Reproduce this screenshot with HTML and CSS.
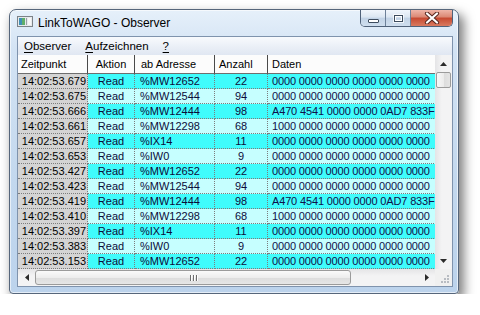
FILE: index.html
```html
<!DOCTYPE html>
<html lang="de">
<head>
<meta charset="UTF-8">
<title>LinkToWAGO - Observer</title>
<link rel="stylesheet" href="styles.css">
</head>
<body>

<div class="window">
    <div class="titlebar">
        <svg class="app-icon" width="16" height="11" viewBox="0 0 16 11">
            <rect x="0.5" y="0.5" width="15" height="10" fill="#e6e9ec" stroke="#7c8288"/>
            <rect x="2" y="2" width="3" height="7" fill="#3f8fb6"/>
            <rect x="5" y="2" width="3" height="7" fill="#5fae6a"/>
            <rect x="9" y="2" width="1" height="7" fill="#9aa0a6"/>
            <rect x="11" y="2" width="3" height="7" fill="#f7f7f7"/>
        </svg>
        <span class="title">LinkToWAGO - Observer</span>
        <div class="caption-buttons">
            <div class="cap-btn cap-min"><span class="glyph-min"></span></div>
            <div class="cap-btn cap-max"><span class="glyph-max"></span></div>
            <div class="cap-btn cap-close">
                <svg width="16" height="12" viewBox="0 0 16 12">
                    <path d="M3 1.5 L13 10.5 M13 1.5 L3 10.5" stroke="#5a2a22" stroke-width="4.2" stroke-linecap="round"/>
                    <path d="M3 1.5 L13 10.5 M13 1.5 L3 10.5" stroke="#ffffff" stroke-width="2.2" stroke-linecap="round"/>
                </svg>
            </div>
        </div>
    </div>

    <div class="client">
        <div class="menubar">
            <span class="menu-entry"><u>O</u>bserver</span>
            <span class="menu-entry"><u>A</u>ufzeichnen</span>
            <span class="menu-entry"><u>?</u></span>
        </div>

        <div class="listview">
            <div class="grid-area">
                <table class="log">
                    <colgroup>
                        <col style="width:70px">
                        <col style="width:47px">
                        <col style="width:80px">
                        <col style="width:53px">
                        <col style="width:230px">
                    </colgroup>
                    <thead>
                        <tr>
                            <th class="h-time">Zeitpunkt</th>
                            <th class="h-action">Aktion</th>
                            <th class="h-addr">ab Adresse</th>
                            <th class="h-count">Anzahl</th>
                            <th class="h-data">Daten</th>
                        </tr>
                    </thead>
                    <tbody>
                        <tr class="odd"><td class="time">14:02:53.679</td><td class="action">Read</td><td class="addr">%MW12652</td><td class="count">22</td><td class="data">0000 0000 0000 0000 0000 0000</td></tr>
                        <tr class="even"><td class="time">14:02:53.675</td><td class="action">Read</td><td class="addr">%MW12544</td><td class="count">94</td><td class="data">0000 0000 0000 0000 0000 0000</td></tr>
                        <tr class="odd"><td class="time">14:02:53.666</td><td class="action">Read</td><td class="addr">%MW12444</td><td class="count">98</td><td class="data">A470 4541 0000 0000 0AD7 833F</td></tr>
                        <tr class="even"><td class="time">14:02:53.661</td><td class="action">Read</td><td class="addr">%MW12298</td><td class="count">68</td><td class="data">1000 0000 0000 0000 0000 0000</td></tr>
                        <tr class="odd"><td class="time">14:02:53.657</td><td class="action">Read</td><td class="addr">%IX14</td><td class="count">11</td><td class="data">0000 0000 0000 0000 0000 0000</td></tr>
                        <tr class="even"><td class="time">14:02:53.653</td><td class="action">Read</td><td class="addr">%IW0</td><td class="count">9</td><td class="data">0000 0000 0000 0000 0000 0000</td></tr>
                        <tr class="odd"><td class="time">14:02:53.427</td><td class="action">Read</td><td class="addr">%MW12652</td><td class="count">22</td><td class="data">0000 0000 0000 0000 0000 0000</td></tr>
                        <tr class="even"><td class="time">14:02:53.423</td><td class="action">Read</td><td class="addr">%MW12544</td><td class="count">94</td><td class="data">0000 0000 0000 0000 0000 0000</td></tr>
                        <tr class="odd"><td class="time">14:02:53.419</td><td class="action">Read</td><td class="addr">%MW12444</td><td class="count">98</td><td class="data">A470 4541 0000 0000 0AD7 833F</td></tr>
                        <tr class="even"><td class="time">14:02:53.410</td><td class="action">Read</td><td class="addr">%MW12298</td><td class="count">68</td><td class="data">1000 0000 0000 0000 0000 0000</td></tr>
                        <tr class="odd"><td class="time">14:02:53.397</td><td class="action">Read</td><td class="addr">%IX14</td><td class="count">11</td><td class="data">0000 0000 0000 0000 0000 0000</td></tr>
                        <tr class="even"><td class="time">14:02:53.383</td><td class="action">Read</td><td class="addr">%IW0</td><td class="count">9</td><td class="data">0000 0000 0000 0000 0000 0000</td></tr>
                        <tr class="odd"><td class="time">14:02:53.153</td><td class="action">Read</td><td class="addr">%MW12652</td><td class="count">22</td><td class="data">0000 0000 0000 0000 0000 0000</td></tr>
                    </tbody>
                </table>
            </div>

            <div class="vscroll">
                <div class="arrow-box">
                    <svg width="7" height="4" viewBox="0 0 7 4"><path d="M0 4 L3.5 0 L7 4 Z" fill="#2b2b2b"/></svg>
                </div>
                <div class="vthumb"></div>
                <div class="track"></div>
                <div class="arrow-box">
                    <svg width="7" height="4" viewBox="0 0 7 4"><path d="M0 0 L3.5 4 L7 0 Z" fill="#2b2b2b"/></svg>
                </div>
            </div>

            <div class="hscroll">
                <div class="arrow-box">
                    <svg width="4" height="7" viewBox="0 0 4 7"><path d="M4 0 L0 3.5 L4 7 Z" fill="#2b2b2b"/></svg>
                </div>
                <div class="hthumb">
                    <span class="grip-line"></span>
                    <span class="grip-line"></span>
                    <span class="grip-line"></span>
                </div>
                <div class="track"></div>
                <div class="arrow-box">
                    <svg width="4" height="7" viewBox="0 0 4 7"><path d="M0 0 L4 3.5 L0 7 Z" fill="#2b2b2b"/></svg>
                </div>
            </div>

            <div class="size-grip">
                <svg width="10" height="10" viewBox="0 0 10 10">
                    <rect x="7" y="1" width="2" height="2" fill="#b8bcc2"/>
                    <rect x="4" y="4" width="2" height="2" fill="#b8bcc2"/>
                    <rect x="7" y="4" width="2" height="2" fill="#b8bcc2"/>
                    <rect x="1" y="7" width="2" height="2" fill="#b8bcc2"/>
                    <rect x="4" y="7" width="2" height="2" fill="#b8bcc2"/>
                    <rect x="7" y="7" width="2" height="2" fill="#b8bcc2"/>
                </svg>
            </div>
        </div>
    </div>
</div>

</body>
</html>
```

FILE: styles.css
```css
body {
    margin: 0;
    background-color: #ffffff;
    font-family: "Liberation Sans", Arial, sans-serif;
}

/* window frame */
.window {
    box-sizing: border-box;
    width: 450px;
    height: 285px;
    margin: 9px 0 0 9px;
    border: 1px solid #56667b;
    border-radius: 7px 7px 4px 4px;
    background: linear-gradient(180deg, #e6f0fa 0%, #d3e3f4 14%, #c3d8ee 60%, #bcd3ec 100%);
    box-shadow: inset 0 0 0 1px rgba(255, 255, 255, 0.6), 4px 6px 11px 1px rgba(0, 0, 0, 0.5);
    display: flex;
    flex-direction: column;
}
.titlebar {
    height: 26px;
    display: flex;
    align-items: flex-start;
    padding: 0 5px 0 7px;
}
.app-icon {
    margin-top: 6px;
    flex-shrink: 0;
}
.title {
    margin: 5px 0 0 5px;
    font-size: 12px;
    line-height: 16px;
    color: #000000;
}
.caption-buttons {
    margin-left: auto;
    display: flex;
    height: 16px;
    border: 1px solid #4f6179;
    border-top: none;
    border-radius: 0 0 5px 5px;
    overflow: hidden;
}
.cap-btn {
    width: 24px;
    height: 16px;
    border-right: 1px solid #6d8098;
    background: linear-gradient(180deg, #f1f6fc 0%, #dbe6f2 45%, #c2d3e6 50%, #cfdeee 100%);
    display: flex;
    align-items: center;
    justify-content: center;
}
.cap-close {
    width: 41px;
    border-right: none;
    background: linear-gradient(180deg, #efb6a8 0%, #dc8a76 42%, #c74b32 52%, #d97a60 100%);
}
.glyph-min {
    width: 9px;
    height: 2px;
    margin-top: 6px;
    background-color: #ffffff;
    border: 1px solid #3d4c5e;
    border-radius: 1px;
}
.glyph-max {
    width: 7px;
    height: 5px;
    border: 1px solid #3d4c5e;
    box-shadow: inset 0 0 0 1px #ffffff, 0 0 0 1px rgba(255, 255, 255, 0.7);
}

/* client area */
.client {
    flex: 1;
    margin: 0 5px 6px 7px;
    border: 1px solid #7f93ad;
    background-color: #ffffff;
    display: flex;
    flex-direction: column;
}
.menubar {
    height: 18px;
    display: flex;
    gap: 14px;
    padding-left: 6px;
    background: linear-gradient(180deg, #f8fafd 0%, #e9eef6 60%, #e0e7f2 100%);
    font-size: 11.5px;
    line-height: 18px;
    color: #000000;
}
.menu-entry u {
    text-decoration-thickness: 1px;
    text-underline-offset: 2px;
}

/* list view */
.listview {
    flex: 1;
    display: grid;
    grid-template-columns: 1fr 17px;
    grid-template-rows: 1fr 17px;
    min-height: 0;
}
.grid-area {
    overflow: hidden;
}
.log {
    table-layout: fixed;
    width: 480px;
    border-collapse: separate;
    border-spacing: 0;
    font-size: 11px;
    color: #000000;
}
.log th {
    height: 18px;
    padding: 0 4px;
    font-weight: normal;
    text-align: left;
    white-space: nowrap;
    overflow: hidden;
    background-color: #fcfcfc;
    border-right: 1px solid #4a4a4a;
    border-bottom: 1px solid #6e6e6e;
}
.log th.h-time {
    padding-left: 3px;
}
.log th.h-action {
    text-align: center;
}
.log th.h-addr {
    padding-left: 6px;
}
.log td {
    height: 14px;
    line-height: 14px;
    padding: 0 4px;
    white-space: nowrap;
    overflow: hidden;
    border-right: 1px dotted #7c7c7c;
    border-bottom: 1px dotted #7c7c7c;
}
.log tr.odd td {
    background-color: #3ffcfc;
}
.log tr.even td {
    background-color: #c6ffff;
}
.log tr td.time {
    background-color: #d4d4d4;
    text-align: right;
    padding: 0 1px 0 0;
}
.log td.action {
    text-align: center;
    color: #0c0c3a;
}
.log td.addr {
    padding-left: 5px;
    color: #0c0c3a;
}
.log td.count {
    text-align: center;
    color: #0c0c3a;
}
.log td.data {
    color: #10104a;
    letter-spacing: -0.15px;
}

/* scroll bars */
.vscroll {
    display: flex;
    flex-direction: column;
    background: linear-gradient(90deg, #e4e4e6 0%, #f3f3f4 40%, #f3f3f4 100%);
}
.hscroll {
    display: flex;
    background: linear-gradient(180deg, #e4e4e6 0%, #f3f3f4 40%, #f3f3f4 100%);
}
.arrow-box {
    width: 17px;
    height: 17px;
    flex-shrink: 0;
    display: flex;
    align-items: center;
    justify-content: center;
}
.track {
    flex: 1;
}
.vthumb {
    box-sizing: border-box;
    width: 15px;
    height: 16px;
    margin: 0 1px;
    border: 1px solid #9b9b9b;
    border-radius: 2px;
    background: linear-gradient(90deg, #f8f8f8 0%, #ececec 50%, #dcdcdc 51%, #e4e4e4 100%);
}
.hthumb {
    box-sizing: border-box;
    width: 316px;
    height: 15px;
    margin: 1px 0;
    border: 1px solid #9b9b9b;
    border-radius: 3px;
    background: linear-gradient(180deg, #fafafa 0%, #ededed 50%, #dcdcdc 51%, #e6e6e6 100%);
    display: flex;
    align-items: center;
    justify-content: center;
    gap: 2px;
}
.grip-line {
    width: 1px;
    height: 6px;
    background-color: #6e6e6e;
    box-shadow: 1px 0 0 #ffffff;
}
.size-grip {
    background-color: #f0f0f0;
    display: flex;
    align-items: flex-end;
    justify-content: flex-end;
    padding: 0 2px 2px 0;
}
```
